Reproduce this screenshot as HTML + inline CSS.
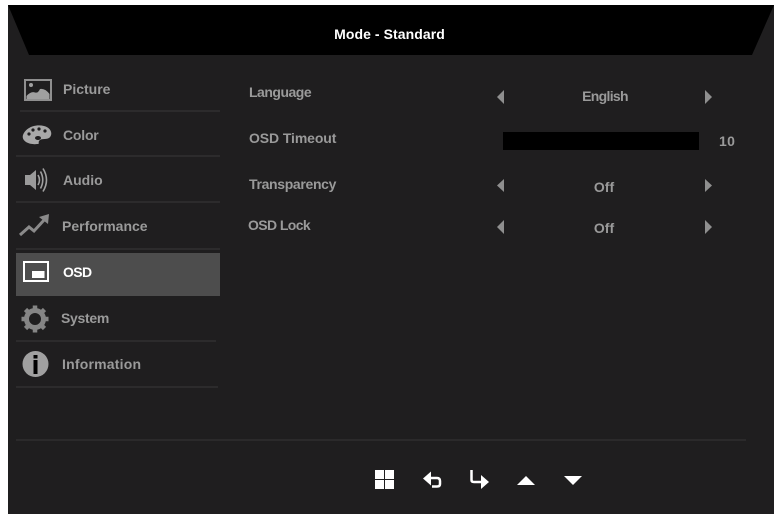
<!DOCTYPE html>
<html lang="en">
<head>
<meta charset="utf-8">
<title>OSD</title>
<style>
html,body{margin:0;padding:0;background:#fff;width:780px;height:528px;overflow:hidden}
body{position:relative;font-family:"Liberation Sans",sans-serif;font-weight:bold}
#panel{position:absolute;left:8px;top:5px;width:766px;height:509px;background:#1f1e1f}
.t{position:absolute;white-space:nowrap;font-size:14px;line-height:18px;color:#9a9a9a;letter-spacing:0;filter:blur(.3px)}
.c{transform:translateX(-50%)}
.line{position:absolute;height:2px;background:#2c2b2c}
svg{position:absolute;left:0;top:0;filter:blur(.3px)}
</style>
</head>
<body>
<div id="panel"></div>
<div style="position:absolute;left:16px;top:253px;width:204px;height:43px;background:#4d4d4d"></div>
<div class="line" style="left:20px;top:110px;width:200px"></div>
<div class="line" style="left:16px;top:155px;width:204px"></div>
<div class="line" style="left:16px;top:201px;width:204px"></div>
<div class="line" style="left:16px;top:248px;width:204px"></div>
<div class="line" style="left:16px;top:340px;width:200px"></div>
<div class="line" style="left:16px;top:386px;width:202px"></div>
<div class="line" style="left:16px;top:439px;width:730px;background:#2b2a2b"></div>

<svg width="780" height="528" viewBox="0 0 780 528">
  <polygon points="8,5 774,5 752,55 29,55" fill="#000"/>
  <!-- picture -->
  <rect x="25" y="80" width="26" height="20" fill="none" stroke="#8f8f8f" stroke-width="2"/>
  <circle cx="31" cy="85" r="2" fill="#a0a0a0"/>
  <path d="M26.500 99 L26.500 96 Q31 91 35 92.500 Q38 93.500 40 89 Q45 88 49.500 94 L49.500 99Z" fill="#a0a0a0"/>
  <!-- color palette -->
  <path d="M23 135 C26 127 36 124 44 126 C52 128 53 135 49 138 C45 140 41 138 39 141 C38 143 40 144 37 144 C31 145 21 142 23 135Z" fill="#a8a8a8"/>
  <circle cx="29" cy="134" r="1.600" fill="#1f1e1f"/>
  <circle cx="33" cy="130" r="1.600" fill="#1f1e1f"/>
  <circle cx="39" cy="129" r="1.600" fill="#1f1e1f"/>
  <circle cx="45" cy="131" r="1.600" fill="#1f1e1f"/>
  <ellipse cx="38" cy="138" rx="3" ry="2" fill="#1f1e1f"/>
  <!-- audio -->
  <path d="M25 175 H30 L36 170 V190 L30 185 H25Z" fill="#9a9a9a"/>
  <path d="M38 175 Q41 180 38 185" fill="none" stroke="#a0a0a0" stroke-width="1.600"/>
  <path d="M40.500 171.500 Q45 180 40.500 188.500" fill="none" stroke="#a0a0a0" stroke-width="1.600"/>
  <path d="M43 168.500 Q50 180 43 191.500" fill="none" stroke="#a0a0a0" stroke-width="1.600"/>
  <!-- performance -->
  <path d="M20 235 L29 227 L34 231 L45 219" fill="none" stroke="#8a8a8a" stroke-width="3"/>
  <polygon points="39,217 49,214 48,224" fill="#8a8a8a"/>
  <!-- OSD -->
  <rect x="24" y="262" width="24" height="19" fill="none" stroke="#fff" stroke-width="2"/>
  <rect x="32" y="271" width="12.500" height="7" fill="#fff"/>
  <!-- system gear -->
  <circle cx="35" cy="319" r="8.500" fill="none" stroke="#858585" stroke-width="5"/>
  <g stroke="#858585" stroke-width="4.500">
    <path d="M35 305.500 V310.500"/><path d="M35 327.500 V332.500"/>
    <path d="M21.500 319 H26.500"/><path d="M43.500 319 H48.500"/>
    <path d="M25.500 309.500 L29 313"/><path d="M41 325 L44.500 328.500"/>
    <path d="M25.500 328.500 L29 325"/><path d="M41 313 L44.500 309.500"/>
  </g>
  <!-- info -->
  <circle cx="35.500" cy="364" r="13" fill="#a0a0a0"/>
  <rect x="33.500" y="355" width="4" height="3.500" fill="#000"/>
  <rect x="33.500" y="360" width="4" height="14" fill="#000"/>
  <!-- arrows -->
  <g fill="#8f8f8f">
    <polygon points="504,90 504,104 497,97"/>
    <polygon points="705,90 705,104 712,97"/>
    <polygon points="504,179 504,192 497,185.500"/>
    <polygon points="705,179 705,192 712,185.500"/>
    <polygon points="504,220 504,234 497,227"/>
    <polygon points="705,220 705,234 712,227"/>
  </g>
  <rect x="503" y="132" width="196" height="18" fill="#000"/>
  <!-- bottom icons -->
  <g fill="#fff">
    <rect x="375" y="470" width="9" height="9"/><rect x="385" y="470" width="9" height="9"/>
    <rect x="375" y="480" width="9" height="9"/><rect x="385" y="480" width="9" height="9"/>
    <polygon points="423,478.500 431,471.500 431,485.500"/>
    <polygon points="489,482 481,475 481,489"/>
    <polygon points="517,485 526,476 535,485"/>
    <polygon points="564,476 582,476 573,485"/>
  </g>
  <path d="M429 478 H437 Q440 478 440 481 V484 Q440 486.500 437 486.500 H432" fill="none" stroke="#fff" stroke-width="2.500"/>
  <path d="M471.500 470 V480 Q471.500 482 474 482 H483" fill="none" stroke="#fff" stroke-width="2.500"/>
</svg>

<span class="t c" style="left:389.500px;top:25px;color:#fff;letter-spacing:.07px">Mode - Standard</span>

<span class="t" style="left:63px;top:80px">Picture</span>
<span class="t" style="left:63px;top:126px;letter-spacing:-.2px">Color</span>
<span class="t" style="left:63px;top:171px">Audio</span>
<span class="t" style="left:62px;top:217px">Performance</span>
<span class="t" style="left:63px;top:263px;color:#fff;letter-spacing:-.6px">OSD</span>
<span class="t" style="left:61px;top:309px;letter-spacing:-.3px">System</span>
<span class="t" style="left:62px;top:355px;letter-spacing:.2px">Information</span>

<span class="t" style="left:249px;top:83px;letter-spacing:-.5px">Language</span>
<span class="t" style="left:249px;top:129px;letter-spacing:-.1px">OSD Timeout</span>
<span class="t" style="left:249px;top:175px;letter-spacing:-.33px">Transparency</span>
<span class="t" style="left:248px;top:216px;letter-spacing:-.6px">OSD Lock</span>

<span class="t c" style="left:605px;top:87px;letter-spacing:-.7px">English</span>
<span class="t" style="left:719px;top:132px;letter-spacing:.35px">10</span>
<span class="t c" style="left:604px;top:178px">Off</span>
<span class="t c" style="left:604px;top:219px">Off</span>
</body>
</html>
